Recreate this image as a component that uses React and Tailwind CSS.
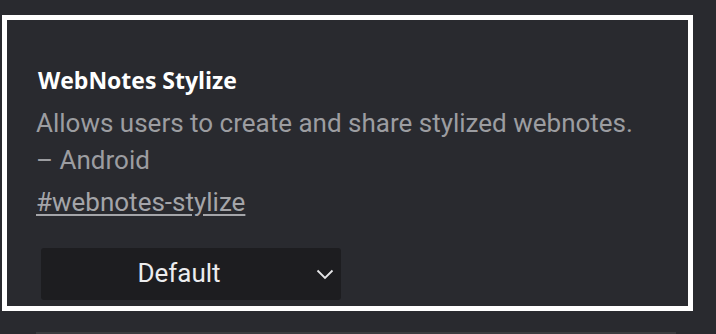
import React from 'react'

function Chevron() {
    return (
        <svg width="18" height="11" viewBox="0 0 18 11" fill="none" className="absolute right-[7px] top-[21px]">
            <path d="M1.5 1.5 L9 9 L16.5 1.5" stroke="#e6e6e8" strokeWidth="1.8" />
        </svg>
    )
}

export default function App() {
    return (
        <div className="w-full h-[334px] overflow-hidden bg-[#292a2f] pt-[15px] pl-[2px]">
            <div className="w-[691px] h-[296px] border-[5px] border-white bg-[#292a2f] pt-[44.5px] pl-[29px]">
                <h2 className="text-[23px] leading-[31px] font-bold text-white pl-[2px] font-['Open_Sans',sans-serif]">
                    WebNotes Stylize
                </h2>
                <div className="mt-[9.5px] text-[26px] leading-[37px] text-[#9c9da1] font-['Roboto',sans-serif]">
                    <p>Allows users to create and share stylized webnotes.</p>
                    <p>– Android</p>
                </div>
                <a href="#webnotes-stylize" className="block w-fit mt-[4.5px] text-[26px] leading-[37px] text-[#a4a5a9] underline underline-offset-[3px] font-['Roboto',sans-serif]">
                    #webnotes-stylize
                </a>
                <div className="relative mt-[27px] ml-[5px] w-[300px] h-[52px] rounded-[3px] bg-[#1d1d20] flex items-center font-['Roboto',sans-serif]">
                    <span className="w-[276px] text-center text-[26px] text-[#ececee]">Default</span>
                    <Chevron />
                </div>
            </div>
            <div className="mt-[21px] ml-[34px] w-[640px] h-[10px] bg-[#3a3b3f]"></div>
        </div>
    )
}
